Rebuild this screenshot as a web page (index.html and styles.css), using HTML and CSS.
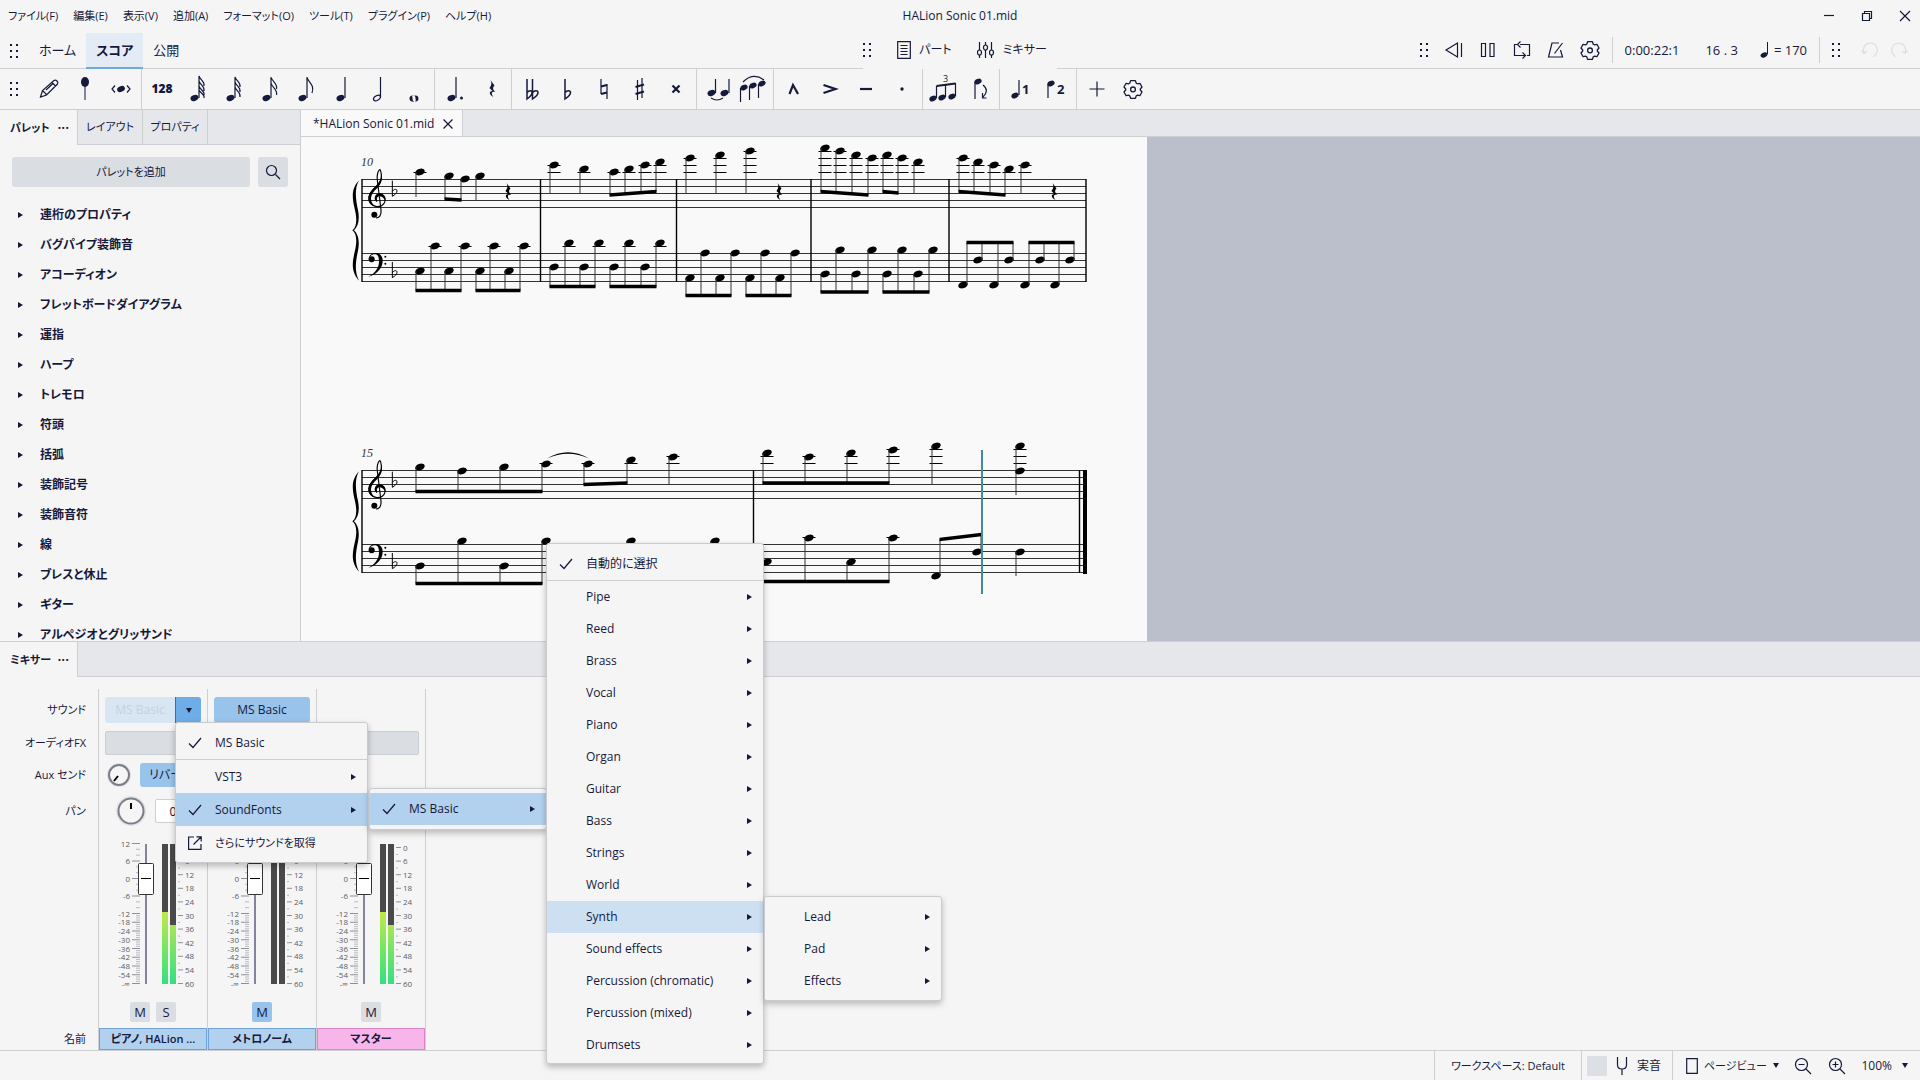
FILE: index.html
```html
<!DOCTYPE html>
<html lang="ja">
<head>
  <meta charset="UTF-8">
  <meta name="viewport" content="width=device-width, initial-scale=1.0">
  <title>HALion Sonic 01.mid</title>
  <link rel="stylesheet" href="styles.css">
</head>
<body>

<!-- shared icon shapes -->
<svg class="defs" aria-hidden="true">
  <symbol id="grip" viewBox="0 0 10 16"><g fill="currentColor"><rect x="0" y="1" width="2" height="2"/><rect x="6" y="1" width="2" height="2"/><rect x="0" y="7" width="2" height="2"/><rect x="6" y="7" width="2" height="2"/><rect x="0" y="13" width="2" height="2"/><rect x="6" y="13" width="2" height="2"/></g></symbol>
  <symbol id="head" viewBox="0 0 12 10"><ellipse cx="6" cy="5" rx="4.5" ry="3.1" transform="rotate(-22 6 5)"/></symbol>
  <symbol id="gear" viewBox="0 0 20 20"><g fill="none" stroke="currentColor" stroke-width="1.3" stroke-linejoin="round"><path d="M7.6 1.7h4.8l.9 2.5 1 .6 2.600-.5 2.100 3.700-1.700 2v1l1.700 2-2.100 3.700-2.600-.5-1 .6-.9 2.500H7.600l-.9-2.500-1-.6-2.600.5L1 13l1.700-2v-1L1 8l2.100-3.700 2.600.5 1-.6z"/><circle cx="10" cy="10.400" r="2.400"/></g></symbol>
  <symbol id="check" viewBox="0 0 14 12"><path d="M1 6.500l4 4L13 1" fill="none" stroke="currentColor" stroke-width="1.200"/></symbol>
  <symbol id="right" viewBox="0 0 5 6"><path d="M0 0l5 3-5 3z" fill="currentColor"/></symbol>
  <symbol id="down" viewBox="0 0 6 5"><path d="M0 0h6L3 5z" fill="currentColor"/></symbol>
</svg>

<div class="app">

  <header class="titlebar">
    <nav class="menubar">
      <button>ファイル(F)</button>
      <button>編集(E)</button>
      <button>表示(V)</button>
      <button>追加(A)</button>
      <button>フォーマット(O)</button>
      <button>ツール(T)</button>
      <button>プラグイン(P)</button>
      <button>ヘルプ(H)</button>
    </nav>
    <div class="doc-title">HALion Sonic 01.mid</div>
    <div class="window-buttons">
      <button aria-label="最小化"><svg width="12" height="12" class="line"><path d="M1 5.500h10"/></svg></button>
      <button aria-label="元に戻す"><svg width="12" height="12" class="line"><path d="M1.500 3.500h7v7h-7zM3.500 3V1.500h7v7H9"/></svg></button>
      <button aria-label="閉じる"><svg width="12" height="12" class="line"><path d="M1 1l10 10M11 1L1 11"/></svg></button>
    </div>
  </header>

  <div class="main-bar">
    <div class="main-tabs">
      <svg class="grip"><use href="#grip"/></svg>
      <button class="main-tab">ホーム</button>
      <button class="main-tab active">スコア</button>
      <button class="main-tab">公開</button>
    </div>
    <div class="view-tools">
      <svg class="grip"><use href="#grip"/></svg>
      <button><svg width="14" height="18" class="line"><path d="M.7.700h12.600v16.600H.7zM3.500 4.500h7M3.500 7.500h7M3.500 10.500h7M3.500 13.500h7"/></svg>パート</button>
      <button><svg width="19" height="18" class="line"><path d="M3.500 1v8M3.500 14v3M9.500 1v3M9.500 9v8M15.500 1v8M15.500 14v3"/><ellipse cx="3.500" cy="11.500" rx="2" ry="2.500"/><ellipse cx="9.500" cy="6.500" rx="2" ry="2.500"/><ellipse cx="15.500" cy="11.500" rx="2" ry="2.500"/></svg>ミキサー</button>
    </div>
    <div class="transport">
      <svg class="grip"><use href="#grip"/></svg>
      <button aria-label="先頭へ"><svg width="20" height="18" class="line"><path d="M13.500 2L2 9l11.500 7zM17.500 2v14"/></svg></button>
      <button aria-label="一時停止"><svg width="20" height="18" class="line"><path d="M3.500 2.500h4v13h-4zM12 2.500h4v13h-4z"/></svg></button>
      <button aria-label="ループ"><svg width="20" height="18" class="line"><path d="M8 3.500h9.500V12M5.500 3.500h-3v11H13M8.500.500L5.500 3.500l3 3M10.500 11.500l3 3-3 3M17.500 12v2.500H15"/></svg></button>
      <button aria-label="メトロノーム"><svg width="20" height="18" class="line"><path d="M13 2H6L2.500 16h14L14.500 9M8.500 12.500L16.500 2"/></svg></button>
      <button aria-label="再生設定"><svg width="20" height="20"><use href="#gear"/></svg></button>
      <span class="bar-sep"></span>
      <span class="time">0:00:22:1</span>
      <span class="beat">16 . 3</span>
      <span class="tempo"><svg width="10" height="18"><use href="#head" x="-1" y="10" width="10" height="8"/><path d="M7.500 1v12" stroke="currentColor"/></svg>= 170</span>
      <span class="bar-sep"></span>
      <svg class="grip"><use href="#grip"/></svg>
      <div class="history">
        <button aria-label="元に戻す" disabled><svg width="20" height="18" class="line"><path d="M4 12A7 7 0 1 1 13 15.500M1.500 9.500L4 12.500l3-2.500"/></svg></button>
        <button aria-label="やり直し" disabled><svg width="20" height="18" class="line"><path d="M16 12A7 7 0 1 0 7 15.500M18.500 9.500L16 12.500l-3-2.500"/></svg></button>
      </div>
    </div>
  </div>

  <div class="note-bar">
    <div class="tool-group first">
      <svg class="grip"><use href="#grip"/></svg>
      <button aria-label="音符入力"><svg class="line"><path d="M9.500 28l2-6.500L23 11.500q1.500-1 3 .5t.500 3L15.500 26zM12 22l3.500 3.500M21 13.500l3.500 3.500M15 21l7-6.500"/></svg></button>
      <button aria-label="ピン"><svg><ellipse cx="18" cy="13" rx="4" ry="5"/><path d="M18 17v14" stroke="currentColor"/></svg></button>
      <button aria-label="リピッチ"><svg><use href="#head" x="12.500" y="15.500" width="11" height="9"/><path d="M12 16.500L9 20l3 3.500M24 16.500l3 3.500-3 3.500" class="stroke"/></svg></button>
    </div>
    <div class="tool-group">
      <button class="text">128</button>
      <button aria-label="64分音符"><svg><use href="#head" x="9" y="24" width="11" height="10"/><path d="M19 29V7c1 4 6 5 5 10M19 12c1 4 6 5 5 10M19 17c1 4 6 5 5 9M19 21c1 3 6 4 5 8" class="stroke"/></svg></button>
      <button aria-label="32分音符"><svg><use href="#head" x="9" y="24" width="11" height="10"/><path d="M19 29V8c1 4 6 5 5 10M19 13c1 4 6 5 5 10M19 18c1 4 6 5 5 10" class="stroke"/></svg></button>
      <button aria-label="16分音符"><svg><use href="#head" x="9" y="24" width="11" height="10"/><path d="M19 29V8c1 5 7 6 5.500 12M19 14c1 5 7 6 5.500 12" class="stroke"/></svg></button>
      <button aria-label="8分音符"><svg><use href="#head" x="9" y="24" width="11" height="10"/><path d="M19 29V8c1 6 8 7 5 16" class="stroke"/></svg></button>
      <button aria-label="4分音符"><svg><use href="#head" x="11" y="24" width="11" height="10"/><path d="M21 29V8" class="stroke"/></svg></button>
      <button aria-label="2分音符"><svg><ellipse cx="17" cy="29" rx="3.800" ry="2.200" transform="rotate(-30 17 29)" class="stroke"/><path d="M20.500 28V8" class="stroke"/></svg></button>
      <button aria-label="全音符"><svg><path fill-rule="evenodd" d="M13.500 29.500a4.500 3.300 0 1 0 9 0 4.500 3.300 0 1 0-9 0zM16.500 29a1.500 2.500-20 1 0 3 .8 1.500 2.500-20 1 0-3-.8z"/></svg></button>
    </div>
    <div class="tool-group">
      <button aria-label="付点"><svg><use href="#head" x="9" y="24" width="11" height="10"/><path d="M19 29V8" class="stroke"/><circle cx="24.500" cy="29" r="1.500"/></svg></button>
      <button aria-label="休符"><svg><use href="#rest" x="14" y="11"/></svg></button>
    </div>
    <div class="tool-group">
      <button aria-label="ダブルフラット"><svg><path d="M13 10v20c3-2 5-4 5-6.500s-3-2.500-5 0M18.500 10v20c3-2 5.500-4 5.500-6.500s-3.500-2.500-5.500 0" class="stroke thick"/></svg></button>
      <button aria-label="フラット"><svg><path d="M15 10v20c3-2 5.500-4 5.500-6.500s-3.500-2.500-5.500 0" class="stroke thick"/></svg></button>
      <button aria-label="ナチュラル"><svg><path d="M15 10v15M21 15v15" class="stroke"/><path d="M15 17.500l6-1.500M15 25l6-1.500" class="stroke heavy"/></svg></button>
      <button aria-label="シャープ"><svg><path d="M15.500 11v20M20 9v20" class="stroke"/><path d="M13.500 18l8.500-2.500M13.500 25l8.500-2.500" class="stroke heavy"/></svg></button>
      <button aria-label="ダブルシャープ"><svg><path d="M14.500 16.500l7 7M21.500 16.500l-7 7" class="stroke heavy"/></svg></button>
    </div>
    <div class="tool-group">
      <button aria-label="タイ"><svg><use href="#head" x="7" y="19" width="11" height="10"/><use href="#head" x="20" y="19" width="11" height="10"/><path d="M16.500 24V10M30 24V10M12 29q6 4 12 0" class="stroke"/></svg></button>
      <button aria-label="スラー"><svg><use href="#head" x="4" y="14" width="10" height="9"/><use href="#head" x="13" y="12" width="10" height="9"/><use href="#head" x="22" y="10" width="10" height="9"/><path d="M5.500 19v14M14.500 17v14M23.500 15v14M8 13Q18 3 29 11" class="stroke"/></svg></button>
    </div>
    <div class="tool-group">
      <button aria-label="マルカート"><svg><path d="M13.500 25L17 16l5 9" class="stroke heavy"/></svg></button>
      <button aria-label="アクセント"><svg><path d="M11.500 16l12 4-12 4" class="stroke heavy"/></svg></button>
      <button aria-label="テヌート"><svg><path d="M12 20h12" class="stroke heavy"/></svg></button>
      <button aria-label="スタッカート"><svg><circle cx="18" cy="20" r="1.700"/></svg></button>
    </div>
    <div class="tool-group">
      <button aria-label="連符"><svg><use href="#head" x="3" y="25" width="10" height="9"/><use href="#head" x="12" y="24" width="10" height="9"/><use href="#head" x="22" y="23" width="10" height="9"/><path d="M11.500 29V17M20.500 28V16M30.500 27V14" class="stroke"/><path d="M11.500 17l19-2.500" class="stroke heavy"/><text x="18" y="13" class="svg-small">3</text></svg></button>
      <button aria-label="符尾を反転"><svg><use href="#head" x="12" y="8" width="10" height="9"/><path d="M14 13v17M22 16c5 4 4 8 0 12M21.500 24v5h4" class="stroke"/></svg></button>
    </div>
    <div class="tool-group">
      <button aria-label="声部 1"><svg><use href="#head" x="8" y="22" width="10" height="9"/><path d="M17 26V11" class="stroke"/><text x="20" y="25" class="svg-num">1</text></svg></button>
      <button aria-label="声部 2"><svg><use href="#head" x="8" y="10" width="10" height="9"/><path d="M10 15v14" class="stroke"/><text x="19" y="25" class="svg-num">2</text></svg></button>
    </div>
    <div class="tool-group last">
      <button aria-label="追加"><svg class="line"><path d="M10.500 20h15M18 12.500v15"/></svg></button>
      <button aria-label="設定"><svg><use href="#gear" x="8" y="10" width="20" height="20"/></svg></button>
    </div>
  </div>

  <div class="workspace">
    <aside class="palette-panel">
      <div class="panel-tabs">
        <button class="panel-tab active">パレット<span class="dots">···</span></button>
        <button class="panel-tab">レイアウト</button>
        <button class="panel-tab">プロパティ</button>
      </div>
      <div class="palette-tools">
        <button class="add-palette">パレットを追加</button>
        <button class="search" aria-label="検索"><svg width="16" height="16" class="line"><circle cx="6.500" cy="6.500" r="5"/><path d="M10.500 10.500l4.500 4.500"/></svg></button>
      </div>
      <ul class="palette-list">
        <li><svg class="arrow"><use href="#right"/></svg>連桁のプロパティ</li>
        <li><svg class="arrow"><use href="#right"/></svg>バグパイプ装飾音</li>
        <li><svg class="arrow"><use href="#right"/></svg>アコーディオン</li>
        <li><svg class="arrow"><use href="#right"/></svg>フレットボードダイアグラム</li>
        <li><svg class="arrow"><use href="#right"/></svg>運指</li>
        <li><svg class="arrow"><use href="#right"/></svg>ハープ</li>
        <li><svg class="arrow"><use href="#right"/></svg>トレモロ</li>
        <li><svg class="arrow"><use href="#right"/></svg>符頭</li>
        <li><svg class="arrow"><use href="#right"/></svg>括弧</li>
        <li><svg class="arrow"><use href="#right"/></svg>装飾記号</li>
        <li><svg class="arrow"><use href="#right"/></svg>装飾音符</li>
        <li><svg class="arrow"><use href="#right"/></svg>線</li>
        <li><svg class="arrow"><use href="#right"/></svg>ブレスと休止</li>
        <li><svg class="arrow"><use href="#right"/></svg>ギター</li>
        <li><svg class="arrow"><use href="#right"/></svg>アルペジオとグリッサンド</li>
      </ul>
    </aside>

    <main class="score-panel">
      <div class="score-tabs">
        <button class="score-tab">*HALion Sonic 01.mid<svg width="12" height="12" class="line"><path d="M1.500 1.500l9 9M10.500 1.500l-9 9"/></svg></button>
      </div>
      <div class="canvas">
        <svg class="sheet" id="sheet" viewBox="301 137 846 504">
          <defs>
            <g id="rest"><path d="M3.500 0l4 5.500c-2 2-2 3.500.8 6.500-3.800-1-4.600 1.500-1.800 5C1.500 14.500 2 11 5.500 11L2.500 8C4.500 5.500 5 3 3.500 0z"/></g>
            <!-- brace, clefs and key signature, drawn at three times their size -->
            <g id="opening" transform="translate(340 130) scale(.33333)">
              <path d="M57 151C30 180 38 210 46 245C52 275 48 292 37 301C48 310 52 327 46 357C38 392 30 422 57 452C42 425 48 390 54 362C60 332 54 312 42 301C54 290 60 270 54 240C48 212 42 178 57 151z"/>
              <path d="M111 215C103 206 107 193 119 193C131 193 137 203 135 213C133 225 121 231 110 230C96 228 86 217 87 203C88 188 100 178 110 168C120 158 126 148 124 135C123 125 121 119 119 119C113 122 110 140 112 150L123 240C125 255 118 264 108 264" fill="none" stroke="#000" stroke-width="3.500"/>
              <path d="M110 231C92 229 83 216 85 202C87 186 99 176 109 167C119 157 124 147 123 130C129 146 125 160 113 173C101 184 94 192 93 204C93 218 100 227 110 231z"/>
              <path d="M104 208C104 196 111 190 120 190C132 191 139 204 136 214C133 206 127 199 119 199C112 199 109 204 111 214z"/>
              <circle cx="103" cy="254" r="9"/>
              <circle cx="95" cy="388" r="9"/>
              <path d="M86 387C87 374 97 369 107 369C121 369 129 380 128 394C127 416 110 433 85 441C106 429 117 414 117 394C117 380 113 373 105 373C97 373 92 376 90 383z"/>
              <circle cx="136" cy="380" r="3"/><circle cx="136" cy="401" r="3"/>
              <path id="flat" d="M157 152V199C165 194 171 189 171 183C171 176 163 176 157 184" fill="none" stroke="#000" stroke-width="3"/>
              <use href="#flat" y="244"/>
            </g>
          </defs>
        </svg>
      </div>
    </main>
  </div>

  <section class="mixer">
    <div class="panel-tabs">
      <button class="panel-tab active">ミキサー<span class="dots">···</span></button>
    </div>
    <div class="strips">
      <div class="strip labels">
        <div class="row-sound">サウンド</div>
        <div class="row-fx">オーディオFX</div>
        <div class="row-aux">Aux センド</div>
        <div class="row-pan">パン</div>
        <div class="row-fader"></div>
        <div class="row-mute"></div>
        <div class="row-name">名前</div>
      </div>

      <div class="strip">
        <div class="row-sound">
          <button class="sound disabled">MS Basic</button>
          <div class="dropdown">
            <button class="sound-more" aria-label="サウンドを選択"><svg class="arrow-down"><use href="#down"/></svg></button>
            <div class="menu sound-menu">
              <button class="item"><svg class="mark"><use href="#check"/></svg>MS Basic</button>
              <hr>
              <button class="item"><span class="mark"></span>VST3<svg class="arrow"><use href="#right"/></svg></button>
              <div class="has-sub">
                <button class="item open"><svg class="mark"><use href="#check"/></svg>SoundFonts<svg class="arrow"><use href="#right"/></svg></button>
                <div class="menu font-menu">
                  <div class="has-sub">
                    <button class="item open"><svg class="mark"><use href="#check"/></svg>MS Basic<svg class="arrow"><use href="#right"/></svg></button>
                    <div class="menu bank-menu">
                      <button class="item"><svg class="mark"><use href="#check"/></svg>自動的に選択</button>
                      <hr>
                      <button class="item"><span class="mark"></span>Pipe<svg class="arrow"><use href="#right"/></svg></button>
                      <button class="item"><span class="mark"></span>Reed<svg class="arrow"><use href="#right"/></svg></button>
                      <button class="item"><span class="mark"></span>Brass<svg class="arrow"><use href="#right"/></svg></button>
                      <button class="item"><span class="mark"></span>Vocal<svg class="arrow"><use href="#right"/></svg></button>
                      <button class="item"><span class="mark"></span>Piano<svg class="arrow"><use href="#right"/></svg></button>
                      <button class="item"><span class="mark"></span>Organ<svg class="arrow"><use href="#right"/></svg></button>
                      <button class="item"><span class="mark"></span>Guitar<svg class="arrow"><use href="#right"/></svg></button>
                      <button class="item"><span class="mark"></span>Bass<svg class="arrow"><use href="#right"/></svg></button>
                      <button class="item"><span class="mark"></span>Strings<svg class="arrow"><use href="#right"/></svg></button>
                      <button class="item"><span class="mark"></span>World<svg class="arrow"><use href="#right"/></svg></button>
                      <div class="has-sub">
                        <button class="item hover"><span class="mark"></span>Synth<svg class="arrow"><use href="#right"/></svg></button>
                        <div class="menu synth-menu">
                          <button class="item"><span class="mark"></span>Lead<svg class="arrow"><use href="#right"/></svg></button>
                          <button class="item"><span class="mark"></span>Pad<svg class="arrow"><use href="#right"/></svg></button>
                          <button class="item"><span class="mark"></span>Effects<svg class="arrow"><use href="#right"/></svg></button>
                        </div>
                      </div>
                      <button class="item"><span class="mark"></span>Sound effects<svg class="arrow"><use href="#right"/></svg></button>
                      <button class="item"><span class="mark"></span>Percussion (chromatic)<svg class="arrow"><use href="#right"/></svg></button>
                      <button class="item"><span class="mark"></span>Percussion (mixed)<svg class="arrow"><use href="#right"/></svg></button>
                      <button class="item"><span class="mark"></span>Drumsets<svg class="arrow"><use href="#right"/></svg></button>
                    </div>
                  </div>
                </div>
              </div>
              <button class="item"><svg class="mark line" viewBox="0 0 14 14"><path d="M6 1H.600v12.400H13V8M5.500 8.500L13 1M8.500.800h4.700V5.500"/></svg><span class="more-sounds">さらにサウンドを取得</span></button>
            </div>
          </div>
        </div>
        <div class="row-fx"><button class="fx" aria-label="オーディオFX 1"></button></div>
        <div class="row-aux">
          <svg class="knob" width="28" height="28"><circle cx="14" cy="14" r="12" class="halo"/><circle cx="14" cy="14" r="10" class="ring"/><path d="M13 15l-4 5" class="hand"/></svg>
          <button class="aux">リバーブ</button>
        </div>
        <div class="row-pan">
          <svg class="knob" width="32" height="32"><circle cx="16" cy="16" r="15" class="halo"/><circle cx="16" cy="16" r="12.500" class="ring"/><path d="M16 14V8" class="hand"/></svg>
          <input type="text" value="0" aria-label="パン">
        </div>
        <div class="row-fader" data-left="72" data-right="59"></div>
        <div class="row-mute"><button>M</button><button>S</button></div>
        <div class="row-name blue">ピアノ, HALion ...</div>
      </div>

      <div class="strip">
        <div class="row-sound"><button class="sound">MS Basic</button></div>
        <div class="row-fx"><button class="fx" aria-label="オーディオFX 2"></button></div>
        <div class="row-aux"></div>
        <div class="row-pan"></div>
        <div class="row-fader" data-left="0" data-right="0"></div>
        <div class="row-mute"><button class="on">M</button></div>
        <div class="row-name blue">メトロノーム</div>
      </div>

      <div class="strip">
        <div class="row-sound"></div>
        <div class="row-fx"><button class="fx" aria-label="オーディオFX 3"></button></div>
        <div class="row-aux"></div>
        <div class="row-pan"></div>
        <div class="row-fader" data-left="72" data-right="59"></div>
        <div class="row-mute"><button>M</button></div>
        <div class="row-name pink">マスター</div>
      </div>
    </div>
  </section>

  <footer class="statusbar">
    <button class="status-cell workspace-name">ワークスペース: Default</button>
    <button class="status-cell concert"><span class="toggle"></span><svg width="12" height="18" class="line"><path d="M1.500 0v8q0 4 4.500 4T10.500 8V0M6 12v6"/></svg>実音</button>
    <div class="status-cell view">
      <button class="page-view"><svg width="12" height="16" class="line"><path d="M.700.700h10.600v14.600H.700z"/></svg>ページビュー<svg class="arrow-down"><use href="#down"/></svg></button>
      <button aria-label="縮小"><svg width="18" height="18" class="line"><circle cx="7.500" cy="7.500" r="6"/><path d="M12 12l5 5M4.500 7.500h6"/></svg></button>
      <button aria-label="拡大"><svg width="18" height="18" class="line"><circle cx="7.500" cy="7.500" r="6"/><path d="M12 12l5 5M4.500 7.500h6M7.500 4.500v6"/></svg></button>
      <button class="percent">100%<svg class="arrow-down"><use href="#down"/></svg></button>
    </div>
  </footer>
</div>

<script src="script.js"></script>
</body>
</html>
```
FILE: styles.css
```css
* {
    box-sizing: border-box;
}

body {
    margin: 0;
    background-color: #f5f5f6;
    color: #15193a;
    font-family: "Open Sans", "Noto Sans CJK JP", sans-serif;
    font-size: 12px;
    line-height: 16px;
    font-feature-settings: "palt";
    overflow: hidden;
}

button, input {
    margin: 0;
    padding: 0;
    border: none;
    background: none;
    color: inherit;
    font: inherit;
    font-feature-settings: inherit;
    white-space: nowrap;
}

svg {
    display: block;
    flex: none;
    fill: currentColor;
}

.defs {
    position: absolute;
    width: 0;
    height: 0;
}

.line, .line use {
    fill: none;
    stroke: currentColor;
    stroke-width: 1.2;
}

.app {
    display: flex;
    flex-direction: column;
    height: 100vh;
}

/* Title bar */
.titlebar {
    display: grid;
    grid-template-columns: 1fr auto 1fr;
    align-items: center;
    height: 32px;
}

.menubar {
    display: flex;
    gap: 15px;
    padding-left: 8px;
    font-size: 11px;
}

.window-buttons {
    display: flex;
    justify-content: flex-end;
    gap: 26px;
    padding-right: 9px;
}

/* Main bar */
.main-bar {
    display: grid;
    grid-template-columns: 1fr auto 1fr;
    height: 37px;
    border-bottom: 1px solid #cdcfd2;
}

.main-tabs, .view-tools, .transport {
    display: flex;
    align-items: center;
}

.grip {
    width: 10px;
    height: 16px;
}

.main-tabs {
    padding-left: 10px;
}

.main-tabs .grip {
    margin-right: 9px;
}

.main-tab {
    height: 36px;
    padding: 0 10px 2px;
    font-size: 13px;
}

.main-tab.active {
    padding-bottom: 0;
    background-color: #e3ebf5;
    border-bottom: 2px solid #70a9dd;
    font-weight: 600;
}

.view-tools {
    gap: 24px;
    height: 37px;
    padding: 0 10px 2px 0;
    background-color: #f5f5f6;
}

.view-tools button {
    display: flex;
    align-items: center;
    gap: 8px;
}

.transport {
    justify-content: flex-end;
    gap: 14px;
    padding: 0 11px 2px 0;
    font-size: 13px;
}

.bar-sep {
    width: 1px;
    height: 26px;
    margin: 0 -2px;
    background-color: #cdcfd2;
}

.beat {
    margin: 0 8px 0 12px;
}

.tempo {
    display: flex;
    align-items: center;
    gap: 4px;
}

.history {
    display: flex;
    gap: 9px;
    padding-left: 4px;
    color: #dcdde1;
}

/* Note input bar */
.note-bar {
    display: flex;
    height: 41px;
    border-bottom: 1px solid #cdcfd2;
}

.tool-group {
    display: flex;
    align-items: center;
    padding: 0 2px;
    border-right: 1px solid #cdcfd2;
}

.tool-group.first {
    padding-left: 10px;
}

.tool-group.first .grip {
    margin-right: 11px;
}

.tool-group.last {
    border-right: none;
}

.tool-group button {
    width: 36px;
    height: 40px;
}

.tool-group button svg {
    width: 36px;
    height: 40px;
}

.tool-group .text {
    font-weight: 800;
}

.stroke {
    fill: none;
    stroke: currentColor;
    stroke-width: 1.2;
}

.thick {
    stroke-width: 1.5;
}

.heavy {
    stroke-width: 2.2;
}

.svg-small {
    font-size: 9px;
}

.svg-num {
    font-size: 13px;
    font-weight: 700;
}

/* Workspace */
.workspace {
    display: flex;
    flex: 1;
    min-height: 0;
}

.palette-panel {
    width: 301px;
    border-right: 1px solid #cdcfd2;
    overflow: hidden;
}

.panel-tabs {
    display: flex;
    height: 35px;
    background-color: #e6e7ea;
    border-bottom: 1px solid #cdcfd2;
}

.panel-tab {
    width: 65px;
    height: 34px;
    border-right: 1px solid #cdcfd2;
    font-size: 11px;
}

.panel-tab.active {
    display: flex;
    align-items: center;
    justify-content: space-between;
    width: 78px;
    height: 35px;
    padding: 0 8px 0 10px;
    background-color: #f5f5f6;
    font-weight: 600;
}

.dots {
    font-size: 14px;
}

.palette-tools {
    display: flex;
    gap: 8px;
    padding: 12px 12px 13px;
}

.palette-tools button {
    height: 30px;
    background-color: #dadde2;
    border-radius: 3px;
}

.add-palette {
    flex: 1;
    font-size: 11px;
}

.search {
    display: flex;
    align-items: center;
    justify-content: center;
    width: 30px;
}

.palette-list {
    margin: 0;
    padding: 0;
    list-style: none;
    font-size: 12px;
    font-weight: 600;
}

.palette-list li {
    display: flex;
    align-items: center;
    gap: 17px;
    height: 30px;
    padding-left: 18px;
}

.arrow {
    width: 5px;
    height: 6px;
}

.arrow-down {
    width: 6px;
    height: 5px;
}

/* Score */
.score-panel {
    display: flex;
    flex-direction: column;
    flex: 1;
    min-width: 0;
}

.score-tabs {
    display: flex;
    height: 27px;
    background-color: #e6e7ea;
    border-bottom: 1px solid #cdcfd2;
}

.score-tab {
    display: flex;
    align-items: center;
    gap: 8px;
    padding: 1px 8px 0 12px;
    background-color: #f9f9fa;
    border-right: 1px solid #cdcfd2;
}

.canvas {
    flex: 1;
    min-height: 0;
    background-color: #bbbfcc;
    overflow: hidden;
}

.sheet {
    width: 846px;
    height: 504px;
    background-color: #f9f9f9;
    fill: #000;
}

.ledger, .barline {
    stroke: #000;
}

.staff-line, .stem {
    stroke: #333;
}

.barline {
    stroke-width: 1.4;
}

.measure-number {
    font-family: "Liberation Serif", serif;
    font-style: italic;
    font-size: 12px;
    fill: #333;
}

.cursor {
    stroke: #3f8ca3;
    stroke-width: 2;
}

/* Mixer */
.mixer {
    border-top: 1px solid #cdcfd2;
}

.strips {
    display: flex;
    padding-top: 12px;
}

.strip {
    display: flex;
    flex-direction: column;
    width: 109px;
    border-right: 1px solid #cdcfd2;
}

.strip > div {
    display: flex;
    align-items: center;
    justify-content: center;
}

.strip.labels {
    width: 99px;
    padding-right: 12px;
    font-size: 11px;
}

.strip.labels > div {
    justify-content: flex-end;
}

.strip .row-sound {
    height: 42px;
    padding: 0 6px;
}

.strip.labels .row-sound, .strip.labels .row-fx {
    padding: 0;
}

.row-fx {
    height: 24px;
    padding: 0 6px;
}

.row-aux {
    height: 40px;
}

.row-pan {
    height: 32px;
}

.row-fader {
    height: 169px;
}

.row-mute {
    height: 32px;
    gap: 6px;
}

.row-name {
    height: 22px;
    font-size: 11px;
}

.row-name.blue {
    background-color: #b1d1ef;
    border: 1px solid #6fa3d6;
    font-weight: 600;
}

.row-name.pink {
    background-color: #f8b5ea;
    border: 1px solid #dc84c6;
    font-weight: 600;
}

.sound {
    flex: 1;
    height: 26px;
    background-color: #98c4eb;
    border-radius: 3px;
}

.sound.disabled {
    background-color: #d8e5f3;
    color: #c3d2e2;
    border-radius: 3px 0 0 3px;
}

.dropdown {
    position: relative;
}

.sound-more {
    display: flex;
    align-items: center;
    justify-content: center;
    width: 26px;
    height: 26px;
    background-color: #6eade7;
    border-left: 1px solid #3d6e9f;
    border-radius: 0 3px 3px 0;
}

.fx {
    width: 100%;
    height: 24px;
    background-color: #dadde1;
    border: 1px solid #cbced3;
    border-radius: 2px;
}

.strip .row-aux {
    justify-content: flex-start;
    padding: 0 6px;
    gap: 7px;
}

.aux {
    flex: 1;
    height: 24px;
    background-color: #98c4eb;
    border-radius: 3px;
}

.strip .row-pan {
    justify-content: flex-start;
    padding: 0 16px;
    gap: 8px;
}

.row-pan input {
    width: 36px;
    height: 24px;
    background-color: #fff;
    border: 1px solid #cdcfd2;
    border-radius: 2px;
    text-align: center;
}

.strip.labels .row-aux, .strip.labels .row-pan {
    justify-content: flex-end;
    padding: 0;
}

.knob .halo {
    fill: #e0e2e6;
}

.knob .ring {
    fill: #f5f5f6;
    stroke: #7b7d87;
    stroke-width: 2;
}

.knob .hand {
    stroke: #000;
    stroke-width: 2;
}

.row-mute button {
    width: 20px;
    height: 20px;
    background-color: #dadde1;
    border-radius: 2px;
    font-size: 13px;
}

.row-mute .on {
    background-color: #98c4eb;
}

.fader text {
    font-size: 8px;
    fill: #5b5d66;
}

.fader .tick {
    stroke: #8d8f96;
}

.fader .minor {
    stroke: #b9bbc2;
}

/* Menus */
.menu {
    position: absolute;
    z-index: 10;
    padding: 4px 0;
    background-color: #f5f5f6;
    border: 1px solid #c9cbcf;
    border-radius: 3px;
    box-shadow: 0 3px 6px rgba(0, 0, 0, 0.25);
}

.menu hr {
    height: 1px;
    margin: 0;
    border: none;
    background-color: #cdcfd2;
}

.has-sub {
    position: relative;
}

.item {
    display: flex;
    align-items: center;
    width: 100%;
    height: 32px;
    padding: 0 11px 0 12px;
    text-align: left;
}

.item .mark {
    width: 14px;
    height: 14px;
    margin-right: 13px;
}

.item .arrow {
    margin-left: auto;
}

.item.open {
    background-color: #b1d1ee;
}

.item.hover {
    background-color: #cde0f2;
}

.more-sounds {
    font-size: 11px;
}

.sound-menu {
    top: 25px;
    left: 0;
    width: 193px;
    padding: 3px 0;
}

.sound-menu > .item, .sound-menu > .has-sub > .item {
    height: 33px;
}

.font-menu {
    top: -5px;
    left: 193px;
    width: 178px;
}

.bank-menu {
    top: -250px;
    left: 176px;
    width: 218px;
    padding-bottom: 2px;
}

.synth-menu {
    top: -5px;
    left: 217px;
    width: 178px;
    padding-bottom: 3px;
}

/* Status bar */
.statusbar {
    display: flex;
    justify-content: flex-end;
    height: 30px;
    border-top: 1px solid #cdcfd2;
}

.status-cell {
    display: flex;
    align-items: center;
    border-left: 1px solid #cdcfd2;
}

.status-cell button {
    display: flex;
    align-items: center;
}

.workspace-name {
    justify-content: center;
    width: 147px;
    font-size: 11px;
}

.concert {
    gap: 9px;
    width: 91px;
    padding-left: 5px;
}

.toggle {
    width: 20px;
    height: 20px;
    background-color: #dcdfe3;
}

.view {
    width: 248px;
    padding: 0 12px 0 13px;
    justify-content: space-between;
}

.page-view {
    gap: 6px;
    font-size: 11px;
}

.percent {
    gap: 10px;
}
```
FILE: script.js
```js
const NS = 'http://www.w3.org/2000/svg';
const sheet = document.getElementById('sheet');

function add(parent, tag, attrs, text) {
    const el = document.createElementNS(NS, tag);
    for (const key in attrs) el.setAttribute(key, attrs[key]);
    if (text !== undefined) el.textContent = text;
    parent.appendChild(el);
    return el;
}

function line(parent, x1, y1, x2, y2, cls) {
    return add(parent, 'line', { x1, y1, x2, y2, class: cls });
}

function head(x, y) {
    add(sheet, 'ellipse', { cx: x, cy: y, rx: 4.9, ry: 3.2, transform: `rotate(-20 ${x} ${y})` });
}

// Ledger lines above a staff whose top line is at `top`
function ledgers(x, y, top) {
    for (let ly = top - 7; ly >= y - 2; ly -= 7) line(sheet, x - 6.5, ly, x + 6.5, ly, 'ledger');
}

// notes: [[x, y], ...], beam from y1 to y2
function beamed(notes, top, y1, y2, up) {
    const side = up ? 4 : -4;
    const x1 = notes[0][0] + side;
    const x2 = notes[notes.length - 1][0] + side;
    notes.forEach(([x, y]) => {
        const sx = x + side;
        const by = y1 + (y2 - y1) * (sx - x1) / (x2 - x1);
        head(x, y);
        ledgers(x, y, top);
        line(sheet, sx, y, sx, by, 'stem');
    });
    add(sheet, 'path', { d: `M${x1 - .5} ${y1 - 1.7}L${x2 + .5} ${y2 - 1.7}v3.4L${x1 - .5} ${y1 + 1.7}z` });
}

function quarter(x, y, top, end) {
    head(x, y);
    ledgers(x, y, top);
    line(sheet, x - 4, y, x - 4, end, 'stem');
}

// Alternating bass figure, four notes to a beam
function bass(xs, low, high, top, beam, up) {
    const notes = xs.map((x, i) => [x, i % 2 ? high : low]);
    for (let i = 0; i < notes.length; i += 4) beamed(notes.slice(i, i + 4), top, beam, beam, up);
}

function system(dy, number, bars) {
    for (let i = 0; i < 5; i++) {
        line(sheet, 362, 179.5 + dy + i * 7, 1086, 179.5 + dy + i * 7, 'staff-line');
        line(sheet, 362, 253.5 + dy + i * 7, 1086, 253.5 + dy + i * 7, 'staff-line');
    }
    bars.forEach(x => line(sheet, x, 179 + dy, x, 282 + dy, 'barline'));
    add(sheet, 'use', { href: '#opening', y: dy });
    add(sheet, 'text', { x: 361, y: 165.5 + dy, class: 'measure-number' }, number);
}

system(0, '10', [362, 540.5, 676.5, 811, 949, 1086]);
system(291, '15', [362, 753.5, 1079.5]);
add(sheet, 'rect', { x: 1083, y: 470, width: 4, height: 104 });

// First system, treble
const T1 = 179.5;
quarter(420, 172, T1, 197);
beamed([[449, 176], [465, 179]], T1, 199, 200);
quarter(480, 176, T1, 200);
quarter(554, 165, T1, 193);
quarter(584, 169, T1, 193);
beamed([[614, 172], [629, 169], [645, 165], [660, 162]], T1, 195, 191.5);
quarter(690, 158, T1, 193);
quarter(720, 155, T1, 193);
quarter(750, 151, T1, 193);
beamed([[825, 148], [840, 151], [856, 155], [872, 158]], T1, 191.5, 195);
beamed([[887, 155], [902, 158]], T1, 191.5, 193);
quarter(918, 162, T1, 193);
beamed([[963, 158], [978, 162], [994, 165], [1009, 169]], T1, 191.5, 195);
quarter(1025, 165, T1, 193);
[503, 774, 1049].forEach(x => add(sheet, 'use', { href: '#rest', x: x, y: 183 }));

// First system, bass
bass([420, 435, 449, 465, 480, 494, 509, 524], 271, 246, 253.5, 290.5);
bass([554, 569, 584, 599, 614, 629, 645, 660], 267, 243, 253.5, 286.5);
bass([690, 705, 720, 735, 750, 765, 780, 795], 278, 253, 253.5, 295.5);
bass([825, 840, 856, 872, 887, 902, 918, 933], 274, 250, 253.5, 292);
bass([963, 978, 994, 1009, 1025, 1040, 1055, 1070], 285, 260, 253.5, 242.5, true);

// Second system, treble
const T2 = 470.5;
beamed([[420, 467], [462, 471], [504, 467], [546, 464]], T2, 491.5, 491.5);
beamed([[588, 464], [631, 460]], T2, 484.5, 483);
add(sheet, 'path', { d: 'M547 458.500Q568 446 589 458.500Q568 449 547 458.500z' });
quarter(673, 457, T2, 484);
beamed([[767, 453], [809, 457], [851, 453], [893, 450]], T2, 483, 483);
quarter(936, 446, T2, 484);
quarter(1020, 446, T2, 495);
head(1020, 471);

// Second system, bass
const B2 = 544.5;
bass([420, 462, 504, 546, 588, 631, 673, 715], 566, 541, B2, 583.5);
bass([767, 809, 851, 893], 562, 538, B2, 581.5);
beamed([[936, 576], [977, 552]], B2, 539.5, 534.5, true);
quarter(1020, 552, B2, 576);

line(sheet, 982, 450, 982, 594, 'cursor');

// Fader scales and level meters
document.querySelectorAll('.row-fader').forEach((row, n) => {
    if (!row.dataset.left) return;
    const svg = add(row, 'svg', { class: 'fader', width: 108, height: 169 });
    const grad = add(svg, 'linearGradient', { id: 'level' + n, x1: 0, x2: 0, y1: 85, y2: 157, gradientUnits: 'userSpaceOnUse' });
    add(grad, 'stop', { offset: 0, 'stop-color': '#c0e84b' });
    add(grad, 'stop', { offset: 1, 'stop-color': '#33df82' });

    const marks = ['12', '6', '0', '-6', '-12', '-18', '-24', '-30', '-36', '-42', '-48', '-54', '-∞'];
    marks.forEach((mark, i) => {
        const y = i < 4 ? 16.5 + i * 17.5 : 86.5 + (i - 4) * 8.75;
        const next = i < 4 ? 17.5 : 8.75;
        add(svg, 'text', { x: 31, y: y + 3, 'text-anchor': 'end' }, mark);
        line(svg, 33, y, 41, y, 'tick');
        if (i < 12) {
            const parts = i < 4 ? 3 : 4;
            for (let k = 1; k < parts; k++) line(svg, 37, y + next * k / parts, 41, y + next * k / parts, 'minor');
        }
    });
    for (let i = 0; i <= 10; i++) {
        const y = 20.5 + i * 13.6;
        line(svg, 79, y, 84, y, 'tick');
        if (i < 10) line(svg, 79, y + 7, 81, y + 7, 'minor');
        add(svg, 'text', { x: 86, y: y + 3 }, i * 6);
    }

    add(svg, 'rect', { x: 46, y: 17, width: 2, height: 140, fill: '#83849a' });
    [['left', 63], ['right', 71]].forEach(([side, x]) => {
        const level = Number(row.dataset[side]);
        add(svg, 'rect', { x, y: 17, width: 6, height: 140, fill: '#4a4a4a' });
        add(svg, 'rect', { x, y: 157 - level, width: 6, height: level, fill: `url(#level${n})` });
    });
    add(svg, 'rect', { x: 39.5, y: 36.5, width: 15, height: 31, rx: 1, fill: '#fff', stroke: '#333' });
    add(svg, 'path', { d: 'M42 51.500h10', stroke: '#000' });
});
```
